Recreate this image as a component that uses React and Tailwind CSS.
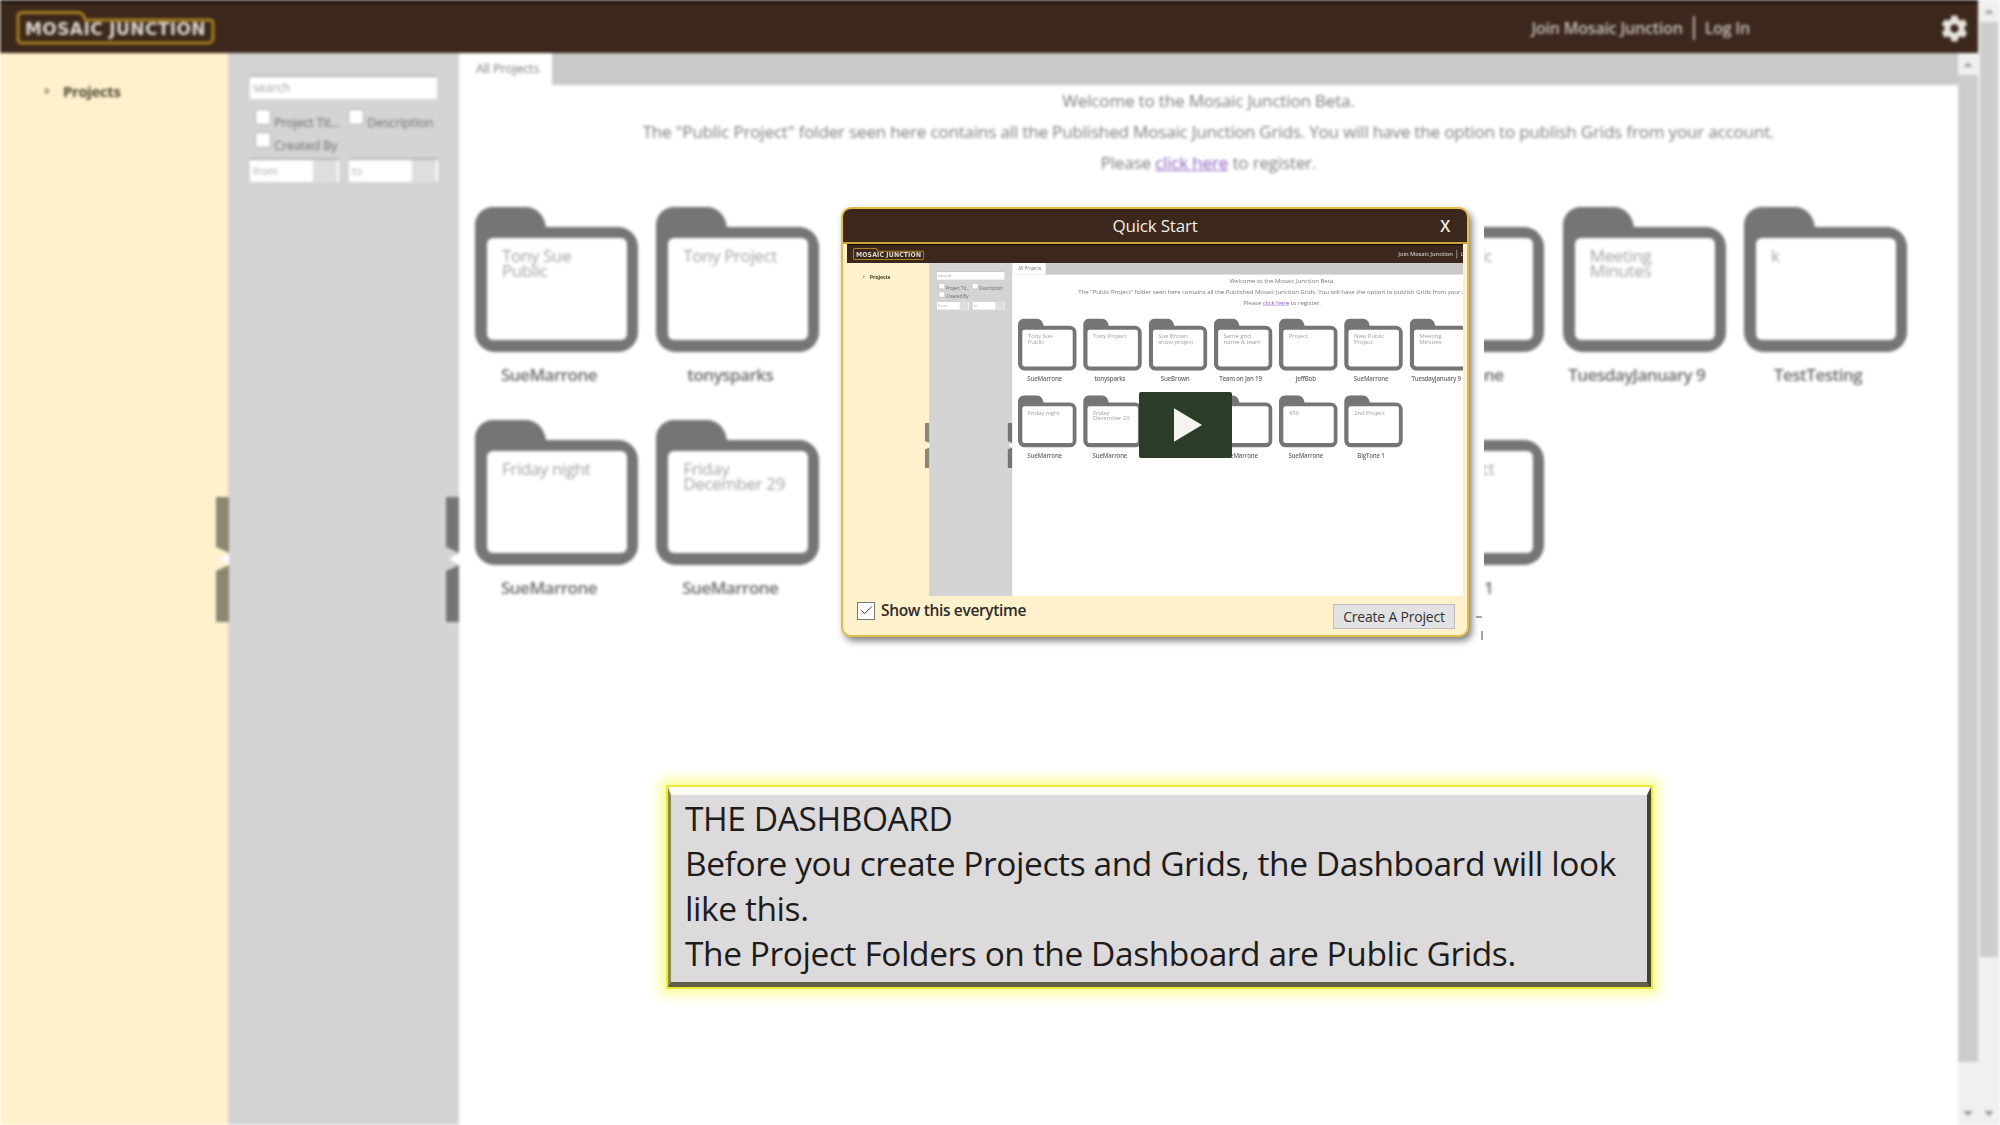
import { FaCog } from "react-icons/fa";
import { Check } from "lucide-react";

const folders = [
  { title: "Tony Sue Public", owner: "SueMarrone" },
  { title: "Tony Project", owner: "tonysparks" },
  { title: "Sue Brown show project", owner: "SueBrown" },
  { title: "Same grid name & team", owner: "Team on Jan 19" },
  { title: "Project", owner: "JeffBob" },
  { title: "New Public Project", owner: "SueMarrone" },
  { title: "Meeting Minutes", owner: "TuesdayJanuary 9" },
  { title: "k", owner: "TestTesting" },
  { title: "Friday night", owner: "SueMarrone" },
  { title: "Friday December 29", owner: "SueMarrone" },
  { title: "Sue Brown", owner: "SueBrown" },
  { title: "", owner: "SueMarrone" },
  { title: "456", owner: "SueMarrone" },
  { title: "2nd Project", owner: "BigTone 1" },
];

function Folder({ title, owner }) {
  return (
    <div className="w-[181.3px]">
      <div className="relative h-[145px] w-[163px]">
        <svg viewBox="0 0 163 145" className="absolute inset-0 h-full w-full">
          <path
            d="M18 0H50C62 0 69 8 71 20H143C154 20 163 29 163 40V125C163 136 154 145 143 145H20C9 145 0 136 0 125V18C0 8 8 0 18 0Z"
            fill="#757575"
          />
          <rect x="12" y="31" width="140" height="102" rx="6" fill="#fff" />
        </svg>
        <div className="relative box-content w-[110px] pt-[41px] pl-[27px] text-[17px] leading-[15px] tracking-[-0.4px] text-[#a3a3a3]">
          {title}
        </div>
      </div>
      <div className="mt-[11px] h-[57px] w-[148px] text-center text-[17px] leading-[24px] font-semibold tracking-[-0.5px] text-[#6a6a6a]">
        {owner}
      </div>
    </div>
  );
}

function Handle({ color, className }) {
  return (
    <svg viewBox="0 0 13 125" className={`absolute h-[125px] w-[13px] ${className}`}>
      <path d="M0 0H13V56L0 50Z" fill={color} />
      <path d="M0 74L13 68V125H0Z" fill={color} />
      <path d="M3 62L13 56V68Z" fill="#fff" />
    </svg>
  );
}

function ScrollBar({ thumb, className }) {
  return (
    <div className={`flex shrink-0 flex-col bg-[#f0f0f0] ${className}`}>
      <div className="flex h-[22px] items-center justify-center">
        <div className="h-0 w-0 border-x-[5px] border-b-[5px] border-x-transparent border-b-[#a8a8a8]" />
      </div>
      <div className={`bg-[#cdcdcd] ${thumb}`} />
      <div className="flex flex-1 items-end justify-center pb-[9px]">
        <div className="h-0 w-0 border-x-[5px] border-t-[5px] border-x-transparent border-t-[#9a9a9a]" />
      </div>
    </div>
  );
}

function Logo() {
  return (
    <div className="relative ml-[16px] flex h-[34px] w-[199px] items-center justify-center">
      <svg viewBox="0 0 199 34" className="absolute inset-0 h-full w-full">
        <path
          d="M2 28V6C2 3 4 1.5 7 1.5H62C66 1.5 68 4 69 9H194C196 9 197 11 197 13V27C197 30 195 32 192 32H6C4 32 2 31 2 28Z"
          fill="none"
          stroke="#a8821e"
          strokeWidth="3"
        />
      </svg>
      <span className="relative pt-[3px] font-['DejaVu_Sans',sans-serif] text-[17px] leading-none font-bold tracking-[0.4px] text-[#ded9cf]">
        MOSAIC JUNCTION
      </span>
    </div>
  );
}

function Dashboard({ className = "" }) {
  return (
    <div className={`flex h-[1125px] w-[2000px] overflow-hidden bg-white font-['Open_Sans',sans-serif] ${className}`}>
      <div className="flex min-w-0 flex-1 flex-col">
        {/* Header */}
        <header className="flex h-[53px] shrink-0 items-center border-t-[3px] border-[#170d07] bg-[#3b271c]">
          <Logo />
          <div className="ml-auto flex items-center text-[16px] font-semibold tracking-[-0.2px] text-[#c9c4be]">
            <span>Join Mosaic Junction</span>
            <span className="mx-[10px] h-[24px] w-[2px] bg-[#bdb7b0]" />
            <span>Log In</span>
          </div>
          <FaCog className="mr-[10px] ml-[191px] text-[#e8e4de]" size={27} />
        </header>

        <div className="flex min-h-0 flex-1">
          {/* Tree */}
          <aside className="w-[228px] shrink-0 bg-[#fff1cc] pt-[28px] pl-[45px]">
            <div className="flex items-center gap-[13px] text-[15px] leading-[20px] font-bold tracking-[-0.4px] text-[#4c4530]">
              <span className="h-0 w-0 border-y-[4px] border-l-[5px] border-y-transparent border-l-[#9c9680]" />
              Projects
            </div>
          </aside>

          {/* Filters */}
          <div className="relative w-[231px] shrink-0 bg-[#d4d4d4] pt-[22px] pl-[22px]">
            <div className="flex h-[24px] w-[187px] items-center border-t-2 border-[#b5b5b5] bg-white px-[3px] text-[12px] text-[#a0a0a0]">
              search
            </div>
            <div className="mt-[7px] flex h-[24px] items-end text-[13px] leading-[16px] text-[#6f6f6f]">
              <span className="mb-[5px] ml-[5px] h-[16px] w-[16px] rounded-[3px] border border-[#aaa] bg-white" />
              <span className="ml-[3px] w-[74px] tracking-[-0.4px]">Project Tit...</span>
              <span className="mb-[5px] h-[16px] w-[16px] rounded-[3px] border border-[#aaa] bg-white" />
              <span className="ml-[3px] tracking-[-0.3px]">Description</span>
            </div>
            <div className="mt-[1px] flex h-[22px] items-end text-[13px] leading-[16px] text-[#6f6f6f]">
              <span className="mb-[5px] ml-[5px] h-[16px] w-[16px] rounded-[3px] border border-[#aaa] bg-white" />
              <span className="ml-[3px] tracking-[-0.3px]">Created By</span>
            </div>
            <div className="mt-[5px] flex gap-[10px]">
              {["from", "to"].map((label) => (
                <div key={label} className="flex h-[24px] w-[89px] items-center border-t-2 border-[#b5b5b5] bg-white pl-[3px] text-[11px] text-[#aaa]">
                  <span className="flex-1">{label}</span>
                  <span className="mr-[2px] h-full w-[24px] bg-[#dedede]" />
                </div>
              ))}
            </div>
            <Handle color="#8c8672" className="top-[444px] -left-[12px]" />
            <Handle color="#757575" className="top-[444px] right-0" />
          </div>

          {/* Content */}
          <main className="flex min-w-0 flex-1 flex-col">
            <div className="h-[32px] shrink-0 bg-[#c9c9c9]">
              <div className="flex h-full w-[93px] items-center justify-center bg-white pl-[4px] text-[13px] tracking-[-0.3px] text-[#7d7d7d]">
                All Projects
              </div>
            </div>
            <div className="text-center text-[17px] leading-[31px] tracking-[-0.16px] text-[#7b7b7b]">
              <p>Welcome to the Mosaic Junction Beta.</p>
              <p>The "Public Project" folder seen here contains all the Published Mosaic Junction Grids. You will have the option to publish Grids from your account.</p>
              <p>
                Please <span className="text-[#8a5cc0] underline">click here</span> to register.
              </p>
            </div>
            <div className="mt-[29px] flex w-[1470px] flex-wrap pl-[16px]">
              {folders.map((f) => (
                <Folder key={f.title + f.owner} {...f} />
              ))}
            </div>
          </main>

          <ScrollBar thumb="h-[987px]" className="w-[20px]" />
        </div>
      </div>
      <ScrollBar thumb="h-[935px] mx-[2px]" className="w-[22px]" />
    </div>
  );
}

function QuickStart() {
  return (
    <div className="absolute top-[207px] left-[841px] flex h-[430px] w-[628px] flex-col overflow-hidden rounded-[10px] border-2 border-[#e3bc45] bg-[#fff1cc] font-['Open_Sans',sans-serif] shadow-[3px_4px_7px_rgba(0,0,0,0.5)]">
      <div className="relative flex h-[35px] shrink-0 items-center justify-center border-b-2 border-[#c9a13a] bg-[#3b271c] pt-[1px] text-[17px] tracking-[-0.2px] text-[#f2eee8]">
        Quick Start
        <span className="absolute right-[17px] text-[16px] font-semibold">X</span>
      </div>
      <div className="relative mx-[4px] h-[352px] shrink-0 overflow-hidden">
        <div className="origin-top-left scale-[0.36] blur-[0.8px]">
          <Dashboard />
        </div>
        <div className="absolute top-[148px] left-[292px] flex h-[66px] w-[93px] items-center justify-center rounded-[2px] bg-[#2b3d28] pl-[4px]">
          <svg viewBox="0 0 30 36" className="h-[34px] w-[28px]">
            <path d="M0 0L30 18L0 36Z" fill="#f4f4f0" />
          </svg>
        </div>
      </div>
      <div className="flex flex-1 items-start justify-between pr-[12px] pl-[14px]">
        <div className="mt-[3px] flex items-center gap-[6px]">
          <span className="flex h-[18px] w-[18px] items-center justify-center border border-[#777] bg-white">
            <Check size={15} strokeWidth={1.6} className="text-[#444]" />
          </span>
          <span className="text-[15.5px] font-semibold tracking-[-0.35px] text-[#2c2c2c]">Show this everytime</span>
        </div>
        <button className="mt-[8px] h-[25px] w-[122px] border border-[#bdbdbd] bg-[#e2e2e2] text-[14px] font-medium tracking-[-0.2px] text-[#333]">
          Create A Project
        </button>
      </div>
    </div>
  );
}

function Callout() {
  return (
    <div className="absolute top-[787px] left-[668px] h-[200px] w-[983px] border-t-[8px] border-r-[4px] border-b-[5px] border-l-[3px] border-t-[#fbfbf5] border-r-[#45452f] border-b-[#5f5f48] border-l-[#8a8a50] bg-[#dcdadb] pt-[1px] pl-[14px] font-['Open_Sans',sans-serif] text-[33.5px] leading-[45px] tracking-[-0.42px] text-[#1c1c1c] shadow-[0_0_0_2px_#e9e93a,0_0_12px_8px_#fbfb9a]">
      <p>THE DASHBOARD</p>
      <p>Before you create Projects and Grids, the Dashboard will look</p>
      <p>like this.</p>
      <p>The Project Folders on the Dashboard are Public Grids.</p>
    </div>
  );
}

export default function App() {
  return (
    <div className="relative h-[1125px] w-[2000px] overflow-hidden bg-white">
      <div className="blur-[1.6px]">
        <Dashboard />
      </div>
      {/* white cut-out left around the dialog in the source image */}
      <div className="absolute top-[195px] left-[828px] h-[452px] w-[656px] bg-white" />
      <span className="absolute top-[616px] left-[1476px] h-[2px] w-[6px] bg-[#a5a5a5]" />
      <span className="absolute top-[631px] left-[1481px] h-[9px] w-[2px] bg-[#a5a5a5]" />
      <QuickStart />
      <Callout />
    </div>
  );
}
